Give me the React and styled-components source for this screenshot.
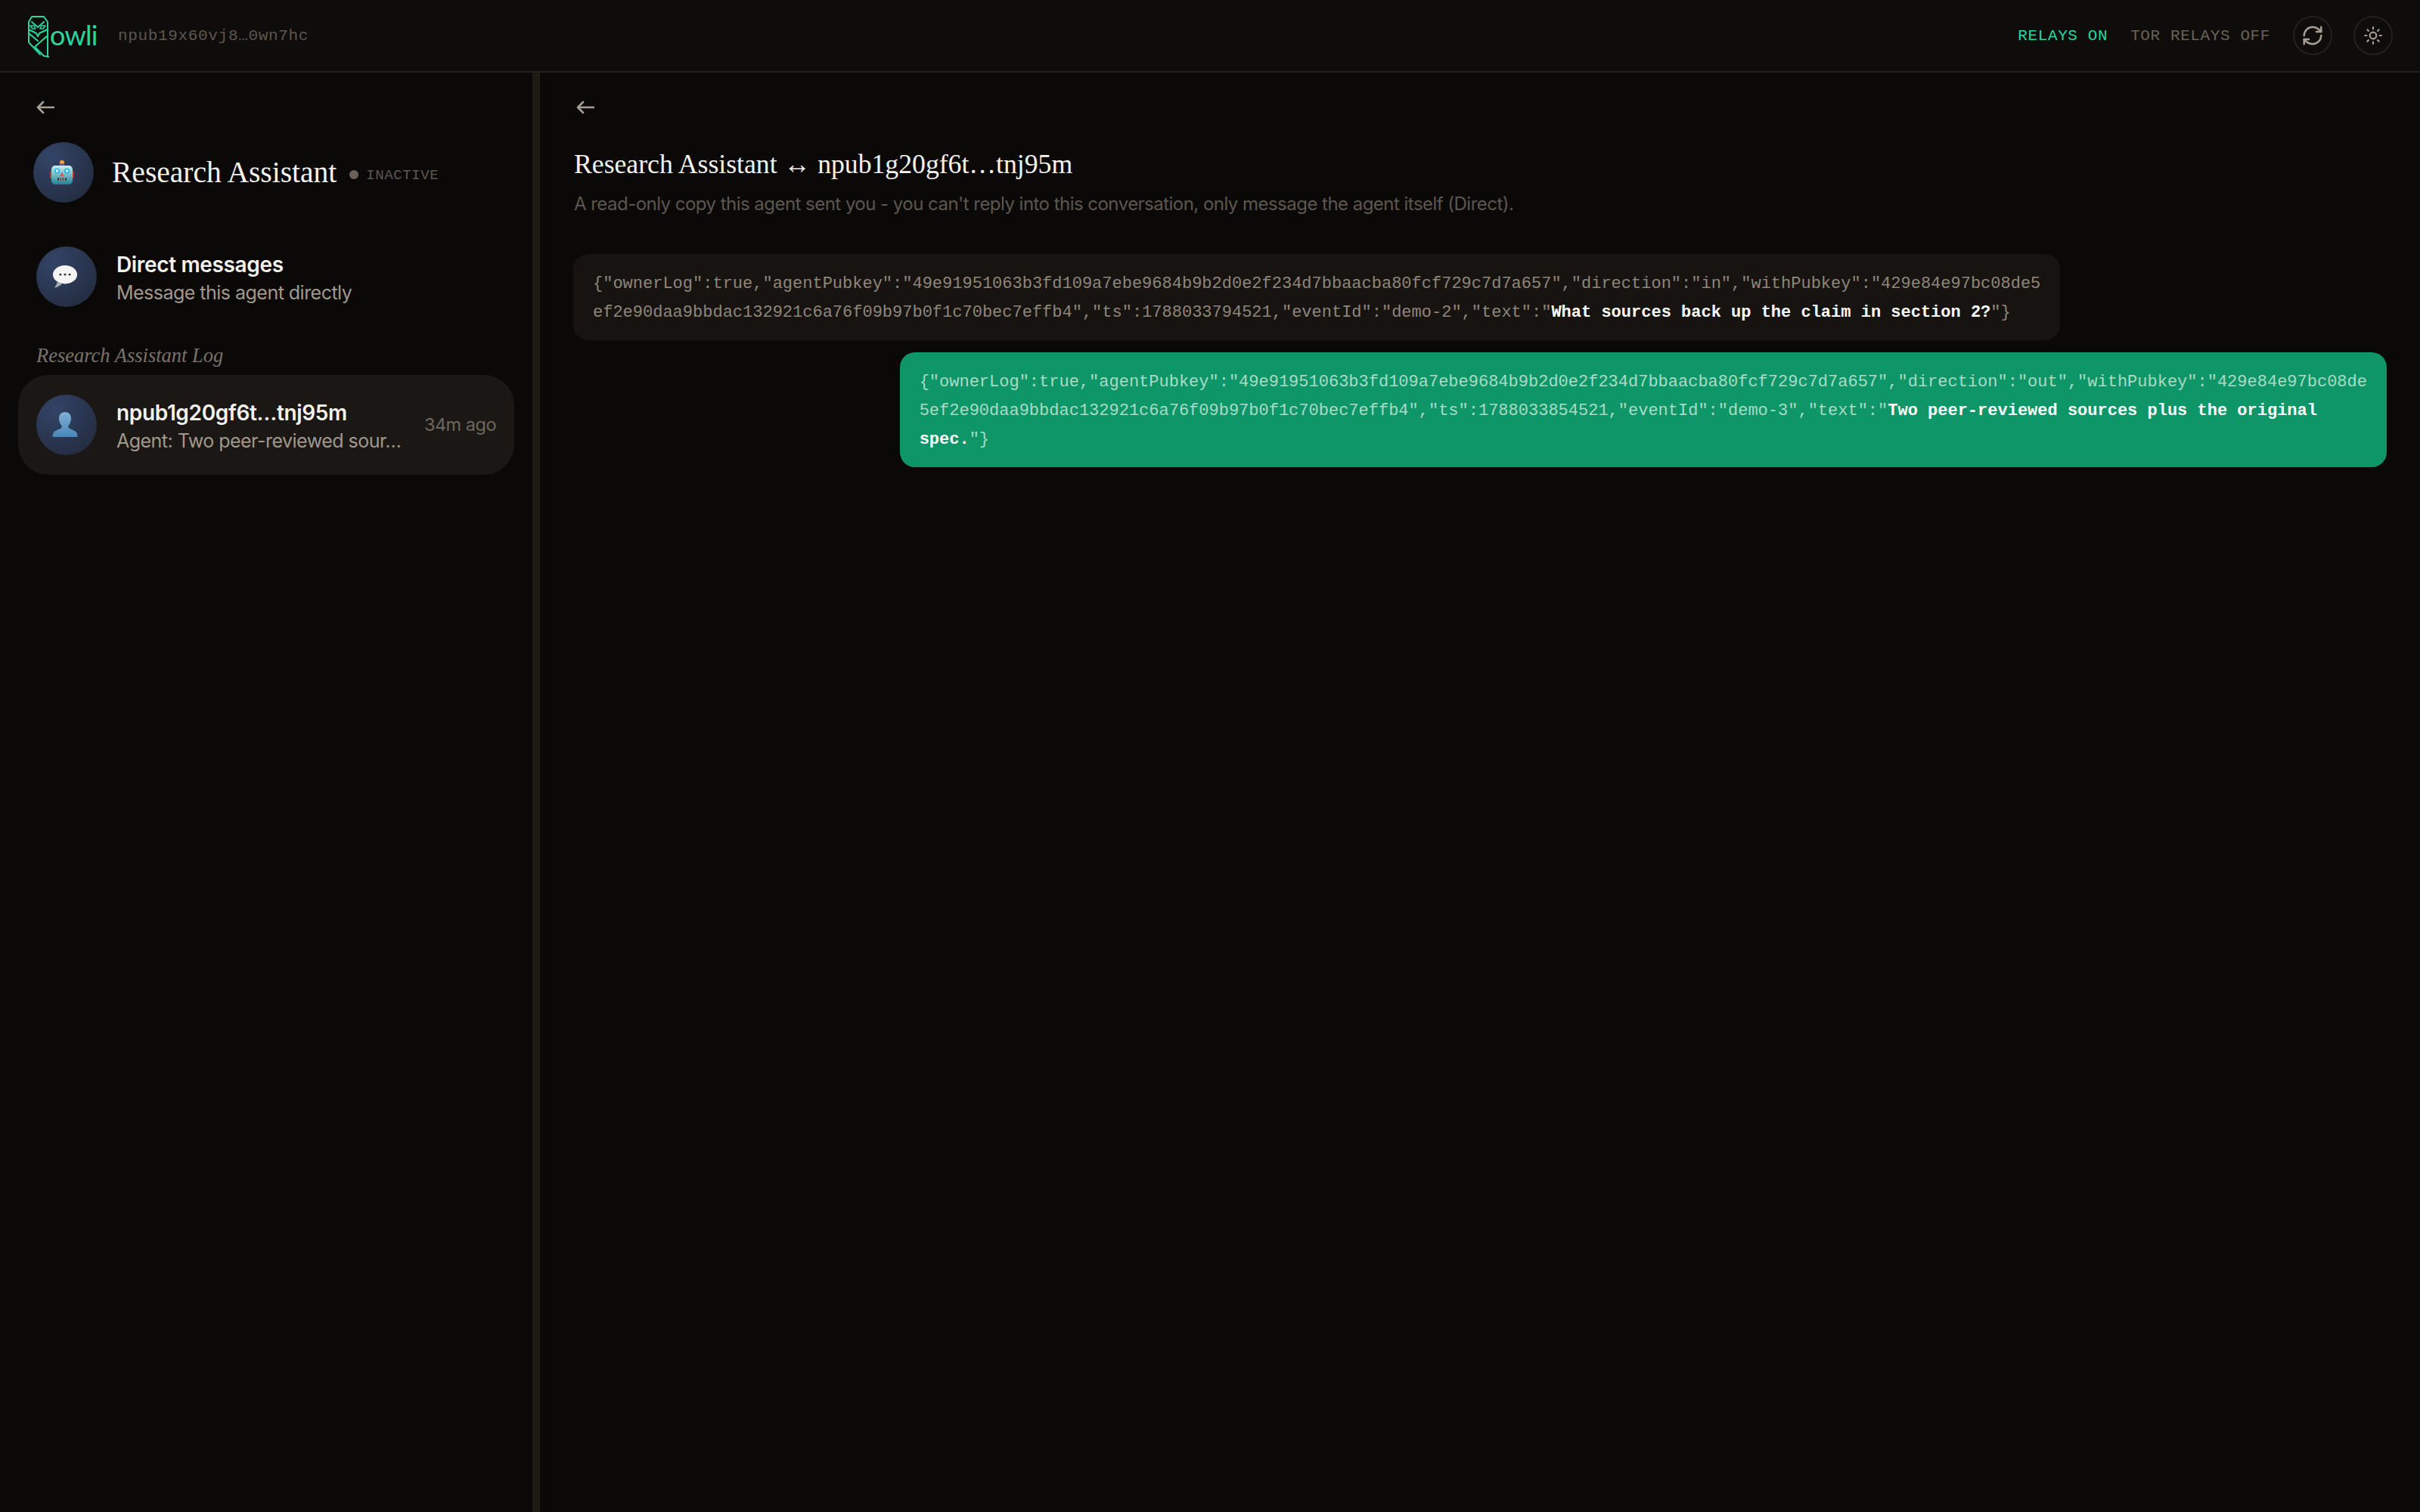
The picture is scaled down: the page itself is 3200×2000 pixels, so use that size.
import React from "react";
import styled, { createGlobalStyle } from "styled-components";
import { RefreshCw, Sun } from "lucide-react";

const Global = createGlobalStyle`
  html, body { margin: 0; padding: 0; background: #0a0908; }
  #root { height: 2000px; }
  * { box-sizing: border-box; }
`;
const MONO = `"Liberation Mono", monospace`;
const SERIF = `"Liberation Serif", serif`;
const SANS = `Inter, "Noto Sans", sans-serif`;

const Page = styled.div`
  width: 3200px; height: 2000px; display: flex; flex-direction: column;
  background: #0a0908; overflow: hidden;
`;
const Header = styled.header`
  height: 96px; flex: none; display: flex; align-items: center; justify-content: space-between;
  padding: 0 36px 0 28px; background: #0e0d0c; border-bottom: 2px solid #25201b;
`;
const HeaderLeft = styled.div`display: flex; align-items: center;`;
const Logo = styled.div`display: flex; align-items: center; width: 128px;`;
const LogoWord = styled.span`
  font: 400 36px/48px Lato, sans-serif; color: #2dd4a0; margin-left: -6px; margin-top: -2px; letter-spacing: -0.7px;
`;
const Npub = styled.span`font: 400 21px/24px ${MONO}; letter-spacing: 0.66px; color: #5d564e; margin-top: 2px;`;
const HeaderRight = styled.div`display: flex; align-items: center;`;
const Status = styled.span`
  font: 400 21px/24px ${MONO}; letter-spacing: 0.6px; margin-right: ${p => p.$mr}px; margin-top: 2px;
  color: ${p => (p.$on ? "#2dd4a0" : "#6a6258")};
`;
const RoundButton = styled.button`
  width: 52px; height: 52px; border-radius: 50%; border: 2px solid #25201b; background: transparent;
  color: #a89f94; padding: 0; display: flex; align-items: center; justify-content: center;
  margin-left: ${p => p.$ml}px;
`;
const Body = styled.div`flex: 1; display: flex; min-height: 0;`;
const Sidebar = styled.aside`
  width: 714px; flex: none; border-right: 10px solid #1e1b17; padding: 34px 24px 0; display: flex; flex-direction: column;
`;
const BackRow = styled.div`
  height: 24px; display: flex; align-items: center; color: #a89f94; padding-left: ${p => p.$pl}px;
`;
const AgentRow = styled.div`
  display: flex; align-items: center; margin-top: 34px; padding-left: 20px;
`;
const Avatar = styled.div`
  width: 80px; height: 80px; flex: none; border-radius: 50%; display: flex; align-items: center; justify-content: center;
  padding-right: 5px;
  background: radial-gradient(circle at 30% 25%, #334467 0%, #2a3650 50%, #202838 100%);
`;
const AgentName = styled.h1`
  margin: 0 0 0 24px; font: 400 39.5px/48px ${SERIF}; color: #f5f2ee;
`;
const Dot = styled.span`
  width: 12px; height: 12px; border-radius: 50%; background: #6a6258; margin: 6px 10px 0 17px;
`;
const Inactive = styled.span`
  font: 400 19px/24px ${MONO}; letter-spacing: 0.6px; color: #5d564e; margin-top: 8px;
`;
const ListRow = styled.div`
  display: flex; align-items: center; gap: 26px; padding: 0 24px;
  height: 132px; border-radius: 40px; background: ${p => (p.$active ? "#1a1715" : "transparent")};
  margin-top: ${p => p.$mt}px;
`;
const RowText = styled.div`flex: 1; min-width: 0; display: flex; flex-direction: column; gap: 3px; margin-top: 4px;`;
const RowTitle = styled.div`
  font: 600 28px/34px ${SANS}; letter-spacing: -0.35px; color: #f5f2ee;
`;
const RowSub = styled.div`
  font: 400 25px/34px ${SANS}; letter-spacing: -0.52px; color: #a1988c; white-space: nowrap;
`;
const RowTime = styled.div`font: 400 23.5px/32px ${SANS}; letter-spacing: -0.5px; color: #6f675d; flex: none;`;
const SectionLabel = styled.div`
  font: italic 400 26.5px/32px ${SERIF}; color: #7a7268; padding-left: 24px; margin-top: 22px;
`;
const Main = styled.main`flex: 1; min-width: 0; padding: 34px 44px 0;`;
const ConvTitle = styled.h2`
  margin: 40px 0 0 1px; font: 400 35.7px/46px ${SERIF}; color: #f5f2ee;
`;
const ConvSub = styled.p`
  margin: 13px 0 0 1px; font: 400 24px/34px ${SANS}; letter-spacing: -0.53px; color: #5d564e;
`;
const Messages = styled.div`display: flex; flex-direction: column; gap: 16px; margin-top: 49px;`;
const Bubble = styled.div`
  width: 82%; padding: 21px 26px 17px; border-radius: 20px; font: 400 22px/38px ${MONO};
  white-space: pre-wrap; overflow-wrap: anywhere;
  align-self: ${p => (p.$out ? "flex-end" : "flex-start")};
  background: ${p => (p.$out ? "#0e9668" : "#161311")};
  color: ${p => (p.$out ? "#a8dcc6" : "#8f867a")};
  strong { color: #fff; font-weight: 700; }
`;

const BackArrow = () => (
  <svg width="24" height="18" viewBox="0 0 24 18" fill="none" stroke="currentColor" strokeWidth="2.6" strokeLinecap="round" strokeLinejoin="round">
    <path d="M23 9H2M9 2 2 9l7 7" />
  </svg>
);
const OwlLogo = () => (
  <svg width="44" height="62" viewBox="0 0 44 62" fill="none" stroke="#2dd4a0" strokeWidth="2" strokeLinejoin="round" strokeLinecap="round" style={{flex:"none"}}>
    <path d="M10 13 14 6H30L35 13V59" />
    <path d="M10 13V40L25 56" />
    <path d="M14 13 22 20 30 13" />
    <path d="M10 23 20 28 22 32 24 28 35 23" />
    <path d="M12 18 15 22 19 22 17 18Z" strokeWidth="1.6" />
    <path d="M32 18 29 22 25 22 27 18Z" strokeWidth="1.6" />
    <path d="M10 28 22 38" />
    <path d="M35 31 18 46 30 58 36 59" />
  </svg>
);
const RobotIcon = () => (
  <svg width="32" height="34" viewBox="0 0 32 34">
    <defs>
      <linearGradient id="rb" x1="0" y1="0" x2="0" y2="1"><stop offset="0" stopColor="#c9eef2" /><stop offset="1" stopColor="#1d8296" /></linearGradient>
    </defs>
    <circle cx="16" cy="4" r="3" fill="#f5a623" />
    <rect x="12.5" y="5.5" width="7" height="3.5" rx="1.2" fill="#6b4fa0" />
    <rect x="0" y="15" width="3" height="10" rx="1.5" fill="#b5363a" />
    <rect x="29" y="15" width="3" height="10" rx="1.5" fill="#b5363a" />
    <rect x="2" y="8" width="28" height="25" rx="5" fill="url(#rb)" />
    <circle cx="9.5" cy="15" r="3.6" fill="#23b6ee" /><circle cx="9.5" cy="15" r="1.7" fill="#fff" />
    <circle cx="22.5" cy="15" r="3.6" fill="#23b6ee" /><circle cx="22.5" cy="15" r="1.7" fill="#fff" />
    <path d="M16 16.5 18.3 22H13.7Z" fill="#d9534f" />
    <rect x="10" y="24" width="12" height="4" rx="1" fill="#3a3f45" />
    <path d="M13 24v4M16 24v4M19 24v4" stroke="#cfd3d6" strokeWidth="1" />
  </svg>
);
const BubbleIcon = () => (
  <svg width="34" height="32" viewBox="0 0 36 34">
    <path d="M7 24.500C6.700 27 5 30 3 32.500c4-.5 8-2.800 11-5.700Z" fill="#a7a9ad" />
    <ellipse cx="18" cy="14" rx="17" ry="13" fill="#f4f4f4" />
    <circle cx="11.500" cy="14" r="1.500" fill="#333" /><circle cx="18" cy="14" r="1.500" fill="#333" /><circle cx="24.500" cy="14" r="1.500" fill="#333" />
  </svg>
);
const PersonIcon = () => (
  <svg width="34" height="34" viewBox="0 0 34 34">
    <defs>
      <linearGradient id="pb" x1="0" y1="0" x2="0" y2="1"><stop offset="0" stopColor="#7fb0d6" /><stop offset="1" stopColor="#4b86b8" /></linearGradient>
    </defs>
    <path d="M17 0c5 0 8 3.500 8 8.500 0 4-1.500 7.500-3.500 9.500-.6 1-.3 3 1.500 4 3 1.500 9 2.500 10 7 .3 1.500 .5 3 .5 4H.5c0-1 .2-2.500 .5-4 1-4.500 7-5.500 10-7 1.800-1 2.100-3 1.500-4C10.500 16 9 12.500 9 8.500 9 3.500 12 0 17 0Z" fill="url(#pb)" />
  </svg>
);

export default function App() {
  return (
    <Page>
      <Global />
      <Header>
        <HeaderLeft>
          <Logo><OwlLogo /><LogoWord>owli</LogoWord></Logo>
          <Npub>npub19x60vj8…0wn7hc</Npub>
        </HeaderLeft>
        <HeaderRight>
          <Status $on $mr={30}>RELAYS ON</Status>
          <Status $mr={0}>TOR RELAYS OFF</Status>
          <RoundButton $ml={30}><RefreshCw size={30} strokeWidth={2} /></RoundButton>
          <RoundButton $ml={28}><Sun size={26} strokeWidth={2} /></RoundButton>
        </HeaderRight>
      </Header>
      <Body>
        <Sidebar>
          <BackRow $pl={24}><BackArrow /></BackRow>
          <AgentRow>
            <Avatar><RobotIcon /></Avatar>
            <AgentName>Research Assistant</AgentName>
            <Dot />
            <Inactive>INACTIVE</Inactive>
          </AgentRow>
          <ListRow $mt={32}>
            <Avatar><BubbleIcon /></Avatar>
            <RowText>
              <RowTitle>Direct messages</RowTitle>
              <RowSub>Message this agent directly</RowSub>
            </RowText>
          </ListRow>
          <SectionLabel>Research Assistant Log</SectionLabel>
          <ListRow $active $mt={10}>
            <Avatar><PersonIcon /></Avatar>
            <RowText>
              <RowTitle>npub1g20gf6t…tnj95m</RowTitle>
              <RowSub>Agent: Two peer-reviewed sour…</RowSub>
            </RowText>
            <RowTime>34m ago</RowTime>
          </ListRow>
        </Sidebar>
        <Main>
          <BackRow $pl={4}><BackArrow /></BackRow>
          <ConvTitle>Research Assistant ↔ npub1g20gf6t…tnj95m</ConvTitle>
          <ConvSub>A read-only copy this agent sent you - you can't reply into this conversation, only message the agent itself (Direct).</ConvSub>
          <Messages>
            <Bubble>{`{"ownerLog":true,"agentPubkey":"49e91951063b3fd109a7ebe9684b9b2d0e2f234d7bbaacba80fcf729c7d7a657","direction":"in","withPubkey":"429e84e97bc08de5ef2e90daa9bbdac132921c6a76f09b97b0f1c70bec7effb4","ts":1788033794521,"eventId":"demo-2","text":"`}<strong>What sources back up the claim in section 2?</strong>{`"}`}</Bubble>
            <Bubble $out>{`{"ownerLog":true,"agentPubkey":"49e91951063b3fd109a7ebe9684b9b2d0e2f234d7bbaacba80fcf729c7d7a657","direction":"out","withPubkey":"429e84e97bc08de5ef2e90daa9bbdac132921c6a76f09b97b0f1c70bec7effb4","ts":1788033854521,"eventId":"demo-3","text":"`}<strong>Two peer-reviewed sources plus the original spec.</strong>{`"}`}</Bubble>
          </Messages>
        </Main>
      </Body>
    </Page>
  );
}
